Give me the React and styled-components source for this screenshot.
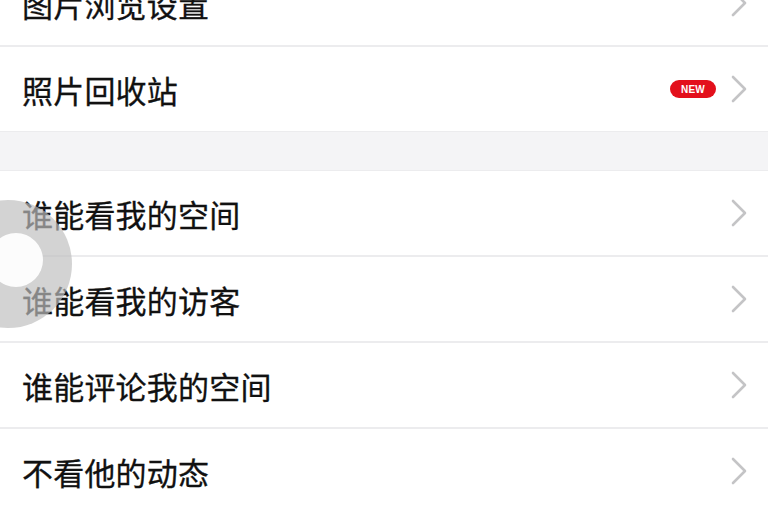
import React from 'react'
import styled, { createGlobalStyle } from 'styled-components'

const GlobalStyle = createGlobalStyle`
  html, body {
    margin: 0;
    padding: 0;
    background: #ffffff;
    overflow: hidden;
  }
  body {
    font-family: "Noto Sans CJK SC", "Noto Sans", sans-serif;
  }
  * {
    box-sizing: border-box;
  }
`

const groups = [
  [
    { title: '图片浏览设置' },
    { title: '照片回收站', badge: 'NEW' },
  ],
  [
    { title: '谁能看我的空间' },
    { title: '谁能看我的访客' },
    { title: '谁能评论我的空间' },
    { title: '不看他的动态' },
  ],
]

const Chevron = () => (
  <svg width="18" height="30" viewBox="0 0 18 30" fill="none">
    <path d="M3 3 L15 15 L3 27" stroke="#c4c4c6" strokeWidth="2.6" strokeLinecap="round" strokeLinejoin="round" />
  </svg>
)

const AssistiveTouch = () => (
  <Floating>
    <svg width="80" height="140" viewBox="0 0 80 140">
      <circle cx="8" cy="70" r="64" fill="rgba(190,190,190,0.68)" />
      <circle cx="16" cy="66" r="27" fill="rgba(255,255,255,0.93)" />
    </svg>
  </Floating>
)

const App = () => {
  return (
    <>
      <GlobalStyle />
      <Page>
        {groups.map((group, gi) => (
          <Group key={gi}>
            {group.map((item, i) => (
              <Row key={i} last={i === group.length - 1}>
                <Title>{item.title}</Title>
                <Right>
                  {item.badge && <Badge>{item.badge}</Badge>}
                  <Chevron />
                </Right>
              </Row>
            ))}
          </Group>
        ))}
        <AssistiveTouch />
      </Page>
    </>
  )
}

export default App

const Page = styled.div`
  position: relative;
  width: 768px;
  height: 510px;
  overflow: hidden;
  background: #f4f4f6;
  display: flex;
  flex-direction: column;
  gap: 38px;
`

const Group = styled.div`
  flex-shrink: 0;
  background: #ffffff;
  border-top: 1px solid #ececee;
  border-bottom: 1px solid #ececee;

  &:first-child {
    margin-top: -39px;
    border-top: none;
  }
`

const Row = styled.div`
  height: ${({ last }) => (last ? '84px' : '86px')};
  display: flex;
  align-items: center;
  justify-content: space-between;
  padding: 0 20px 0 22px;
  border-bottom: ${({ last }) => (last ? 'none' : '2px solid #ececee')};
`

const Title = styled.span`
  font-size: 31px;
  color: #111111;
  letter-spacing: 0.2px;
  -webkit-text-stroke: 0.3px #111111;
`

const Right = styled.div`
  display: flex;
  align-items: center;
  gap: 14px;
`

const Badge = styled.span`
  display: inline-flex;
  align-items: center;
  justify-content: center;
  width: 46px;
  height: 18px;
  border-radius: 9px;
  background: #e3101c;
  color: #ffffff;
  font-family: "Liberation Sans", Arial, sans-serif;
  font-weight: bold;
  font-size: 10px;
  letter-spacing: 0.3px;
`

const Floating = styled.div`
  position: absolute;
  left: 0;
  top: 194px;
  line-height: 0;
  pointer-events: none;
`
